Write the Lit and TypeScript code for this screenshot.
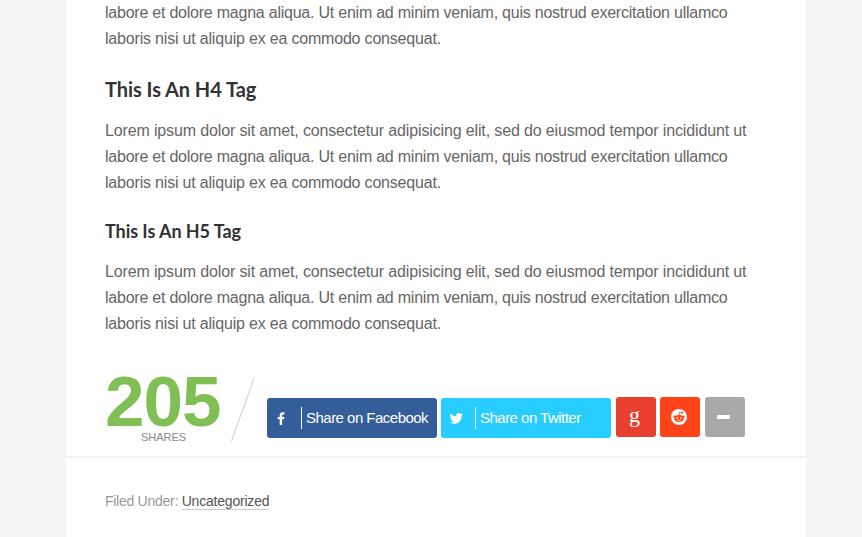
import { LitElement, html, css, svg } from "lit";
import { customElement } from "lit/decorators.js";

const facebook = svg`<path d="M8.1 14V8.2H10L10.3 5.9H8.1V4.5C8.1 3.8 8.3 3.4 9.3 3.4H10.4V1.3C10.2 1.2 9.5 1.2 8.7 1.2C6.9 1.2 5.7 2.3 5.7 4.1V5.9H3.7V8.2H5.7V14Z"/>`;
const twitter = svg`<path d="M14 3.3C13.5 3.5 13 3.7 12.4 3.7C13 3.4 13.4 2.8 13.6 2.2C13 2.5 12.4 2.8 11.8 2.9C11.3 2.3 10.5 2 9.7 2C8 2 6.7 3.600 7.1 5.300C4.900 5.200 2.900 4.100 1.600 2.500C.9 3.700 1.200 5.300 2.400 6.200C2 6.200 1.500 6 1.200 5.800C1.200 7.100 2.100 8.200 3.300 8.500C2.900 8.600 2.500 8.600 2.100 8.500C2.400 9.600 3.400 10.300 4.600 10.400C3.500 11.200 2.200 11.600 .8 11.500C6.400 14.800 12.800 11.100 12.700 4.700C13.200 4.300 13.700 3.800 14 3.300Z"/>`;

@customElement("app-root")
export class AppRoot extends LitElement {
  static styles = css`
    :host { display: block; height: 537px; overflow: hidden; background: #f5f5f5;
      font-family: "Liberation Sans", Arial, sans-serif; color: #666; }
    .page { width: 740px; height: 537px; margin-left: 66px; background: #fff; overflow: hidden;
      display: flex; flex-direction: column; }
    .entry { height: 456px; flex: none; padding: 0 39px; display: flex; flex-direction: column; }
    p { margin: 0; font-size: 16px; line-height: 26px; white-space: nowrap; color: #666; }
    .line { display: block; }
    .a { letter-spacing: -0.142px; }
    .b { letter-spacing: -0.23px; }
    .c { letter-spacing: -0.19px; }
    h4, h5 { margin: 0; font-family: Lato, sans-serif; font-weight: 700; color: #333; white-space: nowrap;
      letter-spacing: -0.06px; }
    h4 { font-size: 20px; line-height: 24px; padding: 25px 0 17px; }
    h5 { font-size: 18px; line-height: 22px; padding: 24px 0 17px; }
    .share { display: flex; margin-top: 36px; height: 72px; }
    .count { width: 115px; flex: none; color: #80bf53; }
    .num { font-size: 71px; line-height: 58px; font-weight: 700; letter-spacing: -1px; }
    .lbl { font-size: 11px; line-height: 12px; text-align: center; color: #888; padding-left: 2px; }
    .slash { width: 26px; height: 66px; margin: 3px 0 0 10px; flex: none; }
    .btns { display: flex; margin: 24px 0 0 11px; gap: 5px; }
    .btn { width: 40px; height: 40px; border-radius: 3px; color: #fff; flex: none; display: flex;
      align-items: center; justify-content: center; }
    .wide { width: 170px; margin-top: 1px; justify-content: flex-start; font-size: 15px;
      letter-spacing: -0.520px; white-space: nowrap; }
    .wide + .wide { margin-left: -1px; }
    .wide svg { width: 15px; height: 15px; margin-left: 8px; fill: #fff; flex: none; }
    .fb svg { margin: 0 1px 0 7px; }
    .wide span { padding-bottom: 1px; }
    .bar { width: 1px; height: 22px; background: #fff; margin: 0 4px 0 11px; flex: none; }
    .fb { background: #335e99; }
    .tw { background: #28cdff; }
    .gp { background: #e93f2e; font: 22px/30px "Liberation Serif", serif; padding: 0 3px 4px 0; box-sizing: border-box; }
    .rd { background: #ff4419; margin-left: -1px; }
    .more { background: #a9a9a9; }
    .foot { border-top: 2px solid #f4f4f4; padding: 33px 39px 0; font-size: 14px; line-height: 20px; color: #999;
      white-space: nowrap; letter-spacing: -0.27px; }
    .foot a { display: inline-block; line-height: 16px; color: #555; border-bottom: 1px solid #ccc; letter-spacing: -0.2px; }
  `;

  private tail() {
    return html`<span class="line b">labore et dolore magna aliqua. Ut enim ad minim veniam, quis nostrud exercitation ullamco</span>
      <span class="line c">laboris nisi ut aliquip ex ea commodo consequat.</span>`;
  }

  private full() {
    return html`<p><span class="line a">Lorem ipsum dolor sit amet, consectetur adipisicing elit, sed do eiusmod tempor incididunt ut</span>${this.tail()}</p>`;
  }

  render() {
    return html`<div class="page">
      <div class="entry">
        <p>${this.tail()}</p>
        <h4>This Is An H4 Tag</h4>
        ${this.full()}
        <h5>This Is An H5 Tag</h5>
        ${this.full()}
        <div class="share">
          <div class="count"><div class="num">205</div><div class="lbl">SHARES</div></div>
          <svg class="slash" viewBox="0 0 26 66"><path d="M1.500 65L24.500 1" stroke="#ccc" stroke-width="1" fill="none"/></svg>
          <div class="btns">
            <div class="btn wide fb"><svg viewBox="0 0 15 15">${facebook}</svg><i class="bar"></i><span>Share on Facebook</span></div>
            <div class="btn wide tw"><svg viewBox="0 0 15 15">${twitter}</svg><i class="bar"></i><span>Share on Twitter</span></div>
            <div class="btn gp">g</div>
            <div class="btn rd"><svg width="40" height="40" viewBox="0 0 40 40">
              <circle cx="19" cy="20" r="8" fill="#fff"/>
              <g fill="#ff4419"><ellipse cx="19" cy="21.500" rx="4.700" ry="3.400"/><circle cx="14.700" cy="19.700" r="1.300"/><circle cx="23.300" cy="19.700" r="1.300"/><circle cx="22.300" cy="15.700" r="1"/></g>
              <path d="M19 18.500L19.700 15.200L22 15.700" fill="none" stroke="#ff4419" stroke-width=".8"/>
              <circle cx="17.200" cy="20.900" r=".8" fill="#fff"/><circle cx="20.800" cy="20.900" r=".8" fill="#fff"/>
              <path d="M17 23Q19 24.200 21 23" fill="none" stroke="#fff" stroke-width=".6"/></svg></div>
            <div class="btn more"><svg width="40" height="40" viewBox="0 0 40 40"><rect x="12" y="18" width="13" height="4" rx="1" fill="#fff"/></svg></div>
          </div>
        </div>
      </div>
      <div class="foot"><span>Filed Under: </span><a>Uncategorized</a></div>
    </div>`;
  }
}
